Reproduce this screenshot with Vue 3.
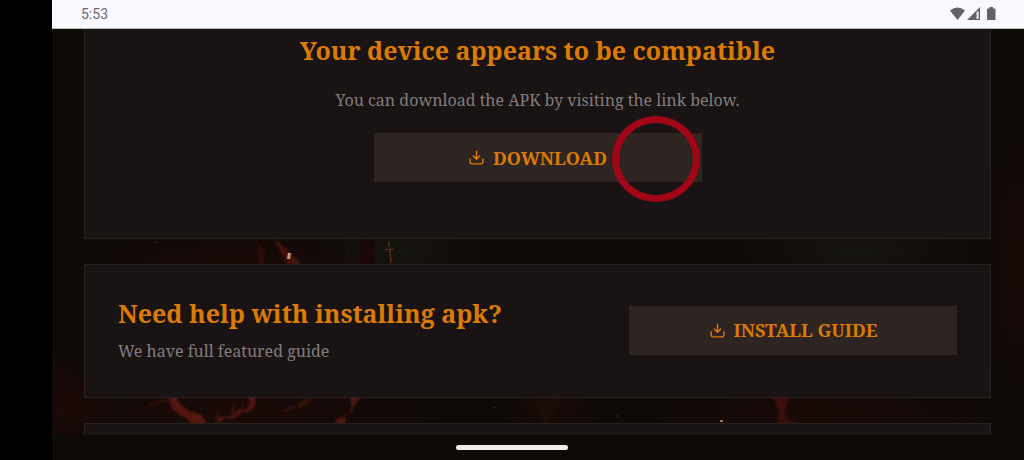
<script setup>
const icon = 'M12 3v11M7.500 10l4.500 4.500 4.500-4.500M3 14v4.500a2.500 2.500 0 0 0 2.500 2.500h13a2.500 2.500 0 0 0 2.500-2.500V14'
</script>

<template>
  <div class="device">
    <div class="screen">
      <header class="status">
        <time>5:53</time>
        <svg class="signals" viewBox="0 0 46 14" aria-hidden="true">
          <path d="M0 3.500Q7.500-2.500 15 3.500L7.500 13z" />
          <path d="M17 13L30 0V13z" />
          <path class="gap" d="M26.500 4.500h2.200V12h-2.200z" />
          <path d="M38 1.500h1.500V0h3.500v1.500h1.500q1 0 1 1V12q0 1-1 1H38q-1 0-1-1V2.500q0-1 1-1z" />
        </svg>
      </header>

      <main class="page">
        <svg class="scene" viewBox="0 0 972 407" preserveAspectRatio="none" aria-hidden="true">
          <defs>
            <radialGradient id="ember">
              <stop offset="0" stop-color="#300805" stop-opacity="0.35" />
              <stop offset="1" stop-color="#300805" stop-opacity="0" />
            </radialGradient>
            <radialGradient id="moss">
              <stop offset="0" stop-color="#202115" stop-opacity="0.45" />
              <stop offset="1" stop-color="#202115" stop-opacity="0" />
            </radialGradient>
            <filter id="haze" x="-20%" y="-20%" width="140%" height="140%" color-interpolation-filters="sRGB">
              <feGaussianBlur stdDeviation="1" />
            </filter>
          </defs>
          <g fill="url(#ember)">
            <ellipse cx="180" cy="235" rx="160" ry="40" />
            <ellipse cx="965" cy="235" rx="40" ry="150" />
            <ellipse cx="180" cy="385" rx="230" ry="50" />
            <ellipse cx="770" cy="385" rx="190" ry="50" />
            <ellipse cx="500" cy="375" rx="55" ry="35" />
            <ellipse cx="10" cy="375" rx="60" ry="60" />
          </g>
          <g fill="url(#moss)">
            <ellipse cx="805" cy="222" rx="130" ry="40" />
            <ellipse cx="350" cy="222" rx="90" ry="40" />
          </g>
          <g filter="url(#haze)">
            <path d="M221 209l14 12 16 16h-15z" fill="#42130c" />
            <path d="M204 212l9 10-1 15h-5l-1-15z" fill="#290e09" />
            <path d="M309 211h12v26h-12z" fill="#1c0706" />
            <path d="M115 367h9l4 9 9 7 13 4 7 13h6l4-11 14-1 7-8 6 2 4-7-3-8h9l-1 12-7 5-6 1-9 6-8-1-11 10h-20l-7-9-7-4-8-6z" fill="#54160f" />
            <path d="M90 381q15-10 29-12l-2 5q-13 2-27 7z" fill="#300e09" />
            <path d="M178 388l4-17 1 16zM188 386l3-16 1 15zM162 393l5-13 0 12z" fill="#35100b" />
            <path d="M297 367h14l-8 9-3 7-7 4 1 13h-14l6-10 8-2 6-9z" fill="#4c180f" />
            <path d="M252 370h9l-6 6-6 4-7 0-9 4-5 0 10-6 6 1z" fill="#35100a" />
            <path d="M721 368h18l-6 14 2 9 24 8h-35l3-15-4-10z" fill="#3a0f0a" />
            <path d="M484 370l27-1-6 13-10 16h-7z" fill="#1b0c08" />
            <path d="M4 383l22-9-18 13-5 1z" fill="#200b08" />
          </g>
          <path d="M337 213v6M333 221h9M338 222l1 12" stroke="#5c2a18" stroke-width="1.500" fill="none" />
          <path d="M295 211v26M324 211v26" stroke="#1a1510" stroke-width="1" />
          <path d="M236 224.500h3l-1 6h-3z" fill="#c59a78" />
          <circle cx="104.500" cy="213.500" r="1" fill="#5b1b12" />
          <circle cx="442.500" cy="379.500" r="1" fill="#611a12" />
          <circle cx="565" cy="388" r="1" fill="#511a12" />
          <path d="M668 392h3v2h-3z" fill="#a67558" />
        </svg>

        <section class="card compatible">
          <h2>Your device appears to be compatible</h2>
          <p>You can download the APK by visiting the link below.</p>
          <div class="action">
            <button type="button" class="button">
              <svg viewBox="0 0 24 24" aria-hidden="true"><path :d="icon" /></svg>
              DOWNLOAD
            </button>
            <span class="touch"></span>
          </div>
        </section>

        <section class="card help">
          <div>
            <h2>Need help with installing apk?</h2>
            <p>We have full featured guide</p>
          </div>
          <button type="button" class="button">
            <svg viewBox="0 0 24 24" aria-hidden="true"><path :d="icon" /></svg>
            INSTALL GUIDE
          </button>
        </section>

        <section class="card next"></section>
      </main>

      <footer class="gesture"><span></span></footer>
    </div>
  </div>
</template>

<style>
body {
  background: #000;
}
</style>

<style scoped>
* {
  box-sizing: border-box;
}
.device {
  display: flex;
  min-height: 100vh;
  padding-left: 52px;
  background: #000;
  font-family: "Noto Serif", "Droid Serif", "DejaVu Serif", serif;
}
.screen {
  flex: 1;
  min-width: 0;
  display: flex;
  flex-direction: column;
  background: #0e0a08;
}
.status {
  display: flex;
  align-items: center;
  justify-content: space-between;
  height: 29px;
  padding: 0 28px 0 29px;
  background: #f9f8ff;
  border-bottom: 1px solid #b9b9bb;
  color: #6b6a70;
  font: 14px/28px Roboto, sans-serif;
}
.signals {
  width: 46px;
  height: 14px;
  fill: #626165;
}
.signals .gap {
  fill: #e4e3e9;
}
.page {
  position: relative;
  flex: 1;
  display: flex;
  flex-direction: column;
  gap: 25px;
  padding: 0 33px 0 32px;
  overflow: hidden;
}
.scene {
  position: absolute;
  inset: 0;
  width: 100%;
  height: 100%;
}
.card {
  position: relative;
  background: #191313;
  border: 1px solid #272120;
}
h2,
p {
  margin: 0;
}
h2 {
  color: #dc7b03;
  font-size: 25px;
  line-height: 36px;
  font-weight: 700;
}
p {
  color: #827d7c;
  font-size: 16px;
  line-height: 28px;
}
.compatible {
  display: flex;
  flex-direction: column;
  align-items: center;
  padding: 3px 32px 56px;
  border-top: 0;
  text-align: center;
}
.compatible p {
  margin: 18px 0 19px;
}
.action {
  position: relative;
}
.button {
  display: flex;
  align-items: center;
  justify-content: center;
  gap: 8px;
  width: 328px;
  height: 49px;
  padding: 0;
  border: 0;
  background: #2e2422;
  color: #dc7b03;
  font: inherit;
  font-size: 18px;
  line-height: 24px;
  font-weight: 700;
}
.button svg {
  width: 17px;
  height: 17px;
  fill: none;
  stroke: currentColor;
  stroke-width: 2;
  stroke-linecap: round;
  stroke-linejoin: round;
}
.touch {
  position: absolute;
  top: -17px;
  right: 2px;
  width: 88px;
  height: 86px;
  border: 7px solid #a00617;
  border-radius: 50%;
}
.help {
  display: flex;
  align-items: center;
  justify-content: space-between;
  padding: 30px 33px 32px;
}
.help p {
  margin-top: 6px;
}
.next {
  flex: 1;
  min-height: 12px;
  border-bottom: 0;
}
.gesture {
  display: flex;
  align-items: center;
  justify-content: center;
  height: 25px;
}
.gesture span {
  width: 112px;
  height: 5px;
  border-radius: 3px;
  margin-right: 52px;
  background: #eeecec;
}
</style>
